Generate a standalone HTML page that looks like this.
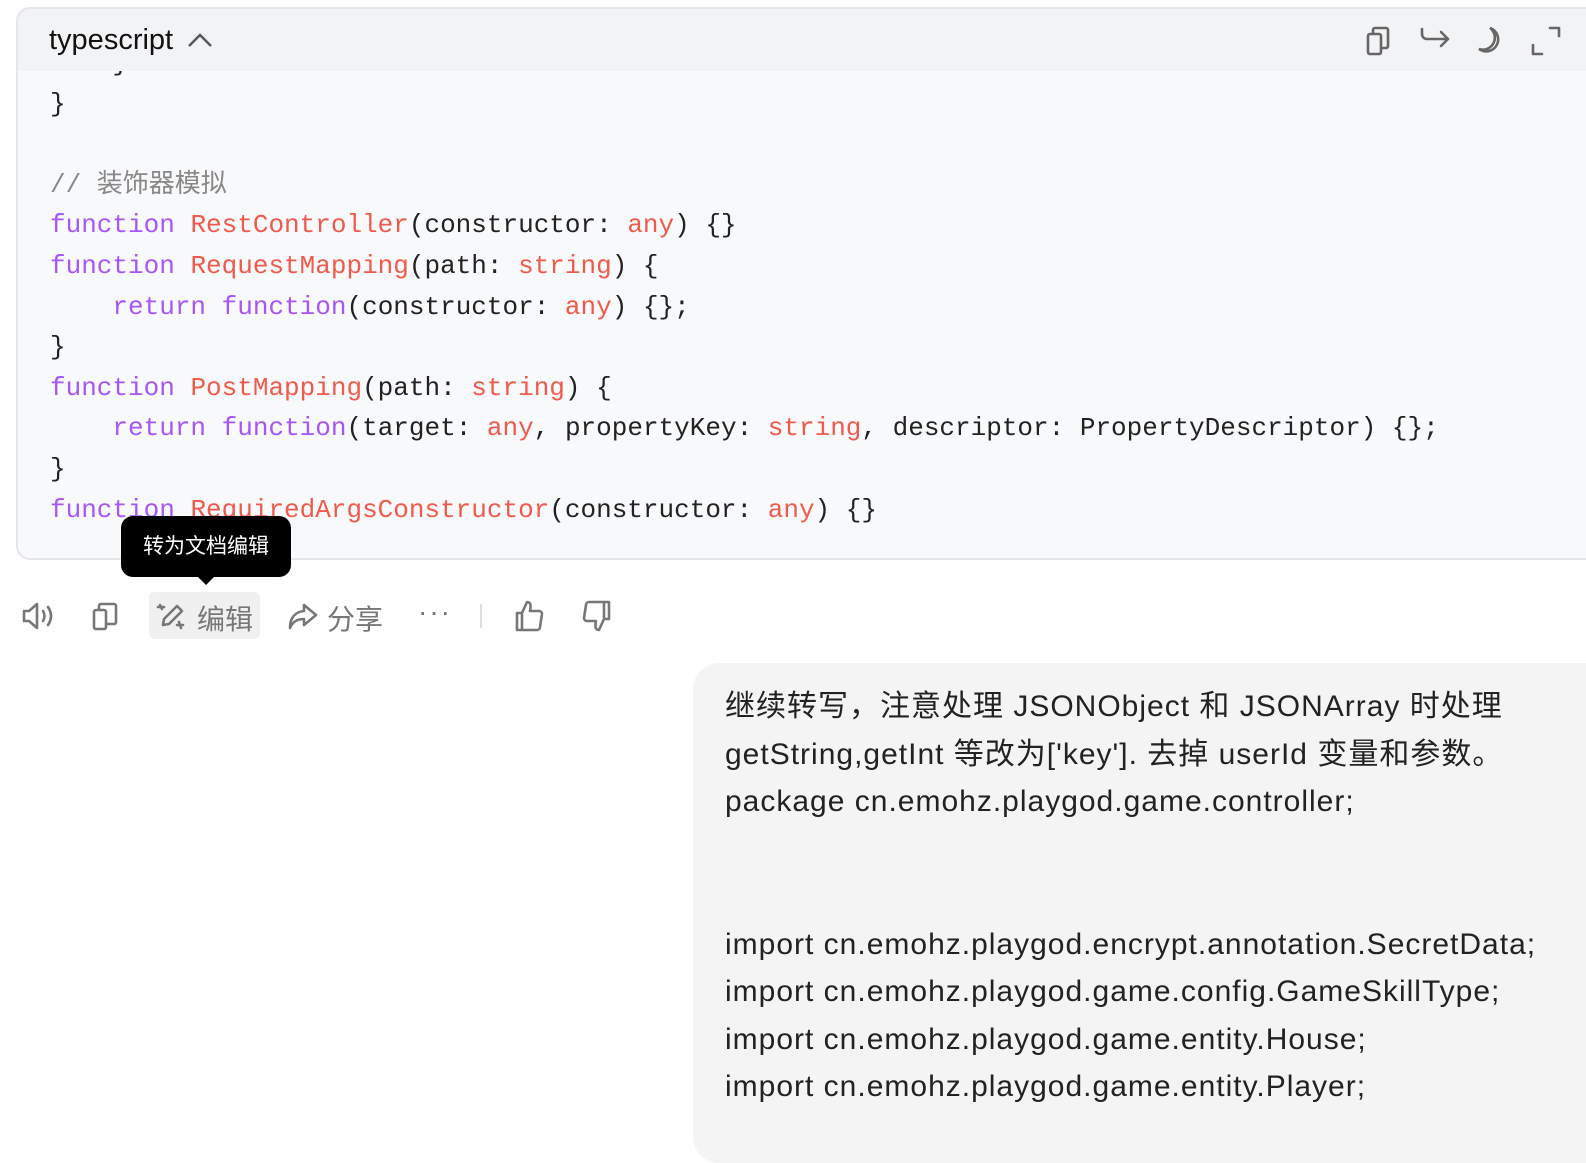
<!DOCTYPE html>
<html><head><meta charset="utf-8"><style>
*{margin:0;padding:0;box-sizing:border-box}
body{width:1586px;height:1086px;overflow:hidden;background:#fff;font-family:"Liberation Sans","Noto Sans CJK SC",sans-serif;position:relative}
.cb{position:absolute;left:16px;top:7px;width:1600px;height:553px;border:2px solid #e5e6ea;border-radius:14px;background:#f8f9fb;overflow:hidden}
.hd{height:62px;background:#f2f3f5;position:absolute;left:0;top:0;right:0;z-index:2}
.hd .t{position:absolute;left:31px;top:15px;font-size:29px;color:#111}
.code{position:absolute;left:32px;top:34px;font-family:"Liberation Mono","Noto Sans CJK SC",monospace;font-size:26px;line-height:40.6px;color:#222;white-space:pre}
.k{color:#a855f7}.f{color:#ef5a4c}.c{color:#888}
.ic{position:absolute}
.tip{position:absolute;left:121px;top:516px;width:170px;height:61px;background:#000;border-radius:12px;color:#fff;font-size:21px;text-align:center;line-height:61px;z-index:3}
.tip:after{content:"";position:absolute;left:77px;bottom:-8px;border:8px solid transparent;border-top-color:#000;border-bottom:0}
.ed{position:absolute;left:149px;top:592px;width:111px;height:47px;background:#f0f0f0;border-radius:6px}
.lbl{position:absolute;top:598px;font-size:28px;color:#777}
.bub{position:absolute;left:693px;top:663px;width:920px;height:500px;background:#f4f4f4;border-radius:26px}
.bub p{position:absolute;left:32px;top:20px;font-size:30px;line-height:47.5px;color:#222;letter-spacing:1px;white-space:pre}
</style></head><body>
<div class="cb">
<div class="hd"><span class="t">typescript</span>
<svg class="ic" style="left:168px;top:20px" width="28" height="22" viewBox="0 0 28 22"><path d="M3 17 L14 6 L25 17" fill="none" stroke="#555" stroke-width="2.4"/></svg>
<svg class="ic" style="left:1345px;top:14px" width="34" height="36" viewBox="0 0 34 36" fill="none" stroke="#666" stroke-width="2.6" stroke-linejoin="round"><rect x="5" y="11" width="13" height="20" rx="2"/><path d="M10 11 V7 a2 2 0 0 1 2-2 H23 a2 2 0 0 1 2 2 V23 a2 2 0 0 1-2 2 H18"/></svg>
<svg class="ic" style="left:1400px;top:16px" width="36" height="30" viewBox="0 0 36 30" fill="none" stroke="#666" stroke-width="2.6" stroke-linecap="round" stroke-linejoin="round"><path d="M4 4 V9 a5 5 0 0 0 5 5 H30 M23 7 L30 14 L23 21"/></svg>
<svg class="ic" style="left:1455px;top:14px" width="34" height="36" viewBox="0 0 34 36" fill="none" stroke="#666" stroke-width="2.6" stroke-linecap="round"><path d="M17 5 A12 12 0 1 1 6 26 A12 12 0 0 0 17 5 Z"/></svg>
<svg class="ic" style="left:1510px;top:14px" width="36" height="36" viewBox="0 0 36 36" fill="none" stroke="#666" stroke-width="2.6" stroke-linecap="round" stroke-linejoin="round"><path d="M22 5 H31 V13 M5 22 V31 H14"/></svg>
</div>
<div class="code">    }
}

<span class="c">// 装饰器模拟</span>
<span class="k">function</span> <span class="f">RestController</span>(constructor: <span class="f">any</span>) {}
<span class="k">function</span> <span class="f">RequestMapping</span>(path: <span class="f">string</span>) {
    <span class="k">return</span> <span class="k">function</span>(constructor: <span class="f">any</span>) {};
}
<span class="k">function</span> <span class="f">PostMapping</span>(path: <span class="f">string</span>) {
    <span class="k">return</span> <span class="k">function</span>(target: <span class="f">any</span>, propertyKey: <span class="f">string</span>, descriptor: PropertyDescriptor) {};
}
<span class="k">function</span> <span class="f">RequiredArgsConstructor</span>(constructor: <span class="f">any</span>) {}</div>
</div>
<div class="tip">转为文档编辑</div>
<div class="ed"></div>
<svg class="ic" style="left:20px;top:600px" width="38" height="32" viewBox="0 0 38 32" fill="none" stroke="#777" stroke-width="2.6" stroke-linejoin="round" stroke-linecap="round"><path d="M4 11 H9 L17 4 V28 L9 21 H4 Z M23 11 Q26 16 23 21 M28 7 Q34 16 28 25"/></svg>
<svg class="ic" style="left:90px;top:600px" width="30" height="34" viewBox="0 0 30 34" fill="none" stroke="#777" stroke-width="2.6" stroke-linejoin="round"><rect x="4" y="10" width="12" height="19" rx="2"/><path d="M9 10 V6 a2 2 0 0 1 2-2 H24 a2 2 0 0 1 2 2 V22 a2 2 0 0 1-2 2 H16"/></svg>
<svg class="ic" style="left:155px;top:600px" width="34" height="34" viewBox="0 0 34 34" fill="none" stroke="#777" stroke-width="2.6" stroke-linejoin="round" stroke-linecap="round"><path d="M8 25 L9 19 L22 6 L27 11 L14 24 Z M5 5 L7 9 M3 7 L9 7 M24 22 L26 28 M22 25 L28 25"/></svg>
<span class="lbl" style="left:197px">编辑</span>
<svg class="ic" style="left:286px;top:600px" width="34" height="34" viewBox="0 0 34 34" fill="none" stroke="#777" stroke-width="2.6" stroke-linejoin="round"><path d="M18 5 L30 15 L18 25 V19 C10 19 6 23 4 28 C4 18 9 12 18 11 Z"/></svg>
<span class="lbl" style="left:327px">分享</span>
<span class="lbl" style="left:418px;top:596px;letter-spacing:2px">···</span>
<div style="position:absolute;left:480px;top:604px;width:2px;height:24px;background:#ddd"></div>
<svg class="ic" style="left:512px;top:598px" width="34" height="36" viewBox="0 0 34 36" fill="none" stroke="#777" stroke-width="2.6" stroke-linejoin="round"><path d="M5 15 H10 V32 H5 Z M10 15 L15 4 C19 4 19 8 18 13 H27 a3 3 0 0 1 3 3 L28 29 a3 3 0 0 1-3 3 H10"/></svg>
<svg class="ic" style="left:580px;top:598px" width="34" height="36" viewBox="0 0 34 36" fill="none" stroke="#777" stroke-width="2.6" stroke-linejoin="round"><path d="M29 21 H24 V4 H29 Z M24 21 L19 32 C15 32 15 28 16 23 H7 a3 3 0 0 1-3-3 L6 7 a3 3 0 0 1 3-3 H24"/></svg>
<div class="bub"><p>继续转写，注意处理 JSONObject 和 JSONArray 时处理
getString,getInt 等改为['key']. 去掉 userId 变量和参数。
package cn.emohz.playgod.game.controller;


import cn.emohz.playgod.encrypt.annotation.SecretData;
import cn.emohz.playgod.game.config.GameSkillType;
import cn.emohz.playgod.game.entity.House;
import cn.emohz.playgod.game.entity.Player;</p></div>
</body></html>
